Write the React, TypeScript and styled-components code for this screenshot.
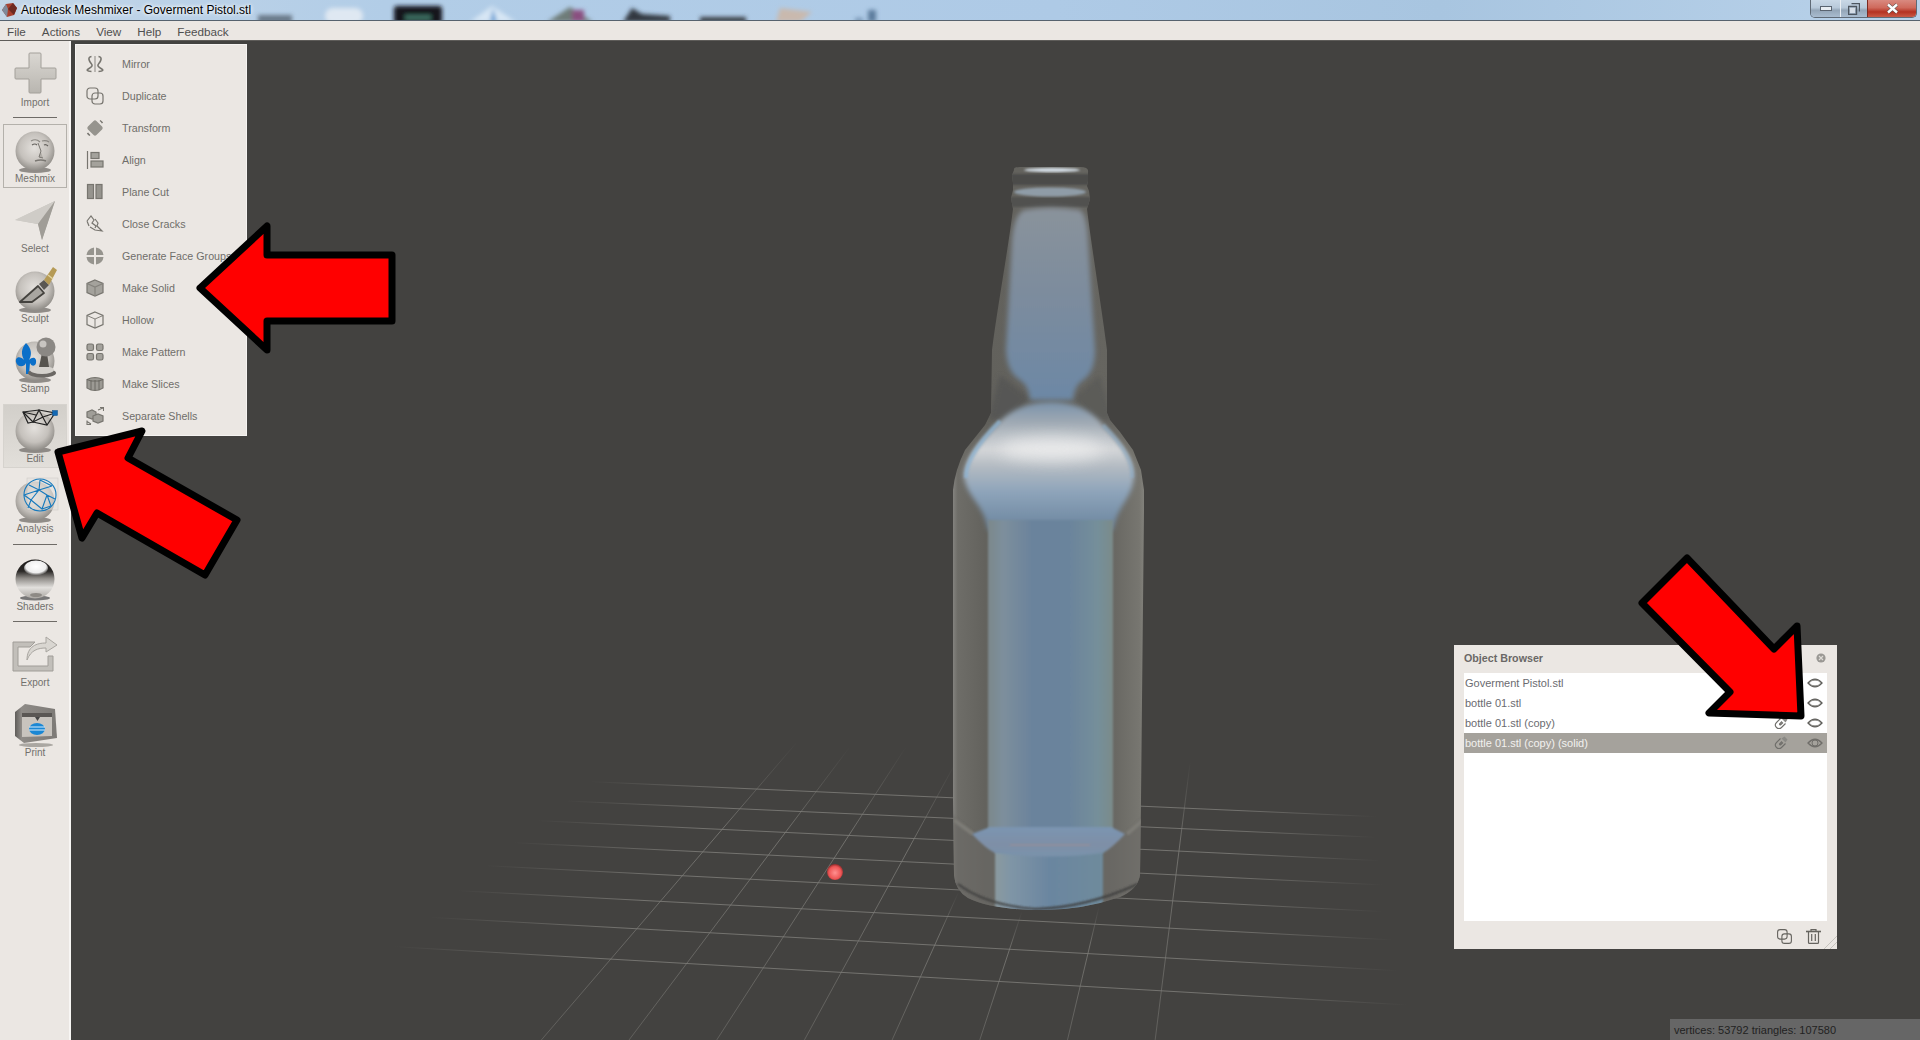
import React from 'react'
import styled, { createGlobalStyle } from 'styled-components'

const UI_FONT = `'Liberation Sans', Arial, sans-serif`

const menuItems: [string, React.FC][] = [
  ['Mirror', MirrorIcon],
  ['Duplicate', DuplicateIcon],
  ['Transform', TransformIcon],
  ['Align', AlignIcon],
  ['Plane Cut', PlaneCutIcon],
  ['Close Cracks', CracksIcon],
  ['Generate Face Groups', FaceGroupsIcon],
  ['Make Solid', SolidIcon],
  ['Hollow', HollowIcon],
  ['Make Pattern', PatternIcon],
  ['Make Slices', SlicesIcon],
  ['Separate Shells', ShellsIcon],
]

const objects = [
  { name: 'Goverment Pistol.stl', magnet: false, selected: false },
  { name: 'bottle 01.stl', magnet: false, selected: false },
  { name: 'bottle 01.stl (copy)', magnet: true, selected: false },
  { name: 'bottle 01.stl (copy) (solid)', magnet: true, selected: true },
]

const hLines = [
  [300, 185, 1420, 290],
  [265, 243, 1420, 352],
  [225, 302, 1425, 422],
  [190, 368, 1430, 495],
  [150, 437, 1430, 575],
  [110, 512, 1445, 660],
  [70, 592, 1450, 752],
  [20, 680, 1465, 855],
]

const vLines = [
  [595, 65, 230, 960],
  [670, 80, 355, 960],
  [750, 80, 480, 960],
  [820, 130, 605, 960],
  [825, 515, 730, 960],
  [915, 575, 855, 960],
  [1025, 560, 980, 960],
  [1155, 125, 1105, 960],
]

const BOTTLE =
  'M1014 170 Q1013 167 1020 167 L1080 167 Q1089 167 1088 172 L1088 181 L1087 186 L1089 191 L1090 199 L1087 209 C1092 250 1102 310 1107 350 L1107 413 L1110 420 L1120 432 L1133 450 L1141 470 L1144 490 L1144 510 L1142 700 L1141 800 L1140 875 Q1138 889 1120 897 Q1080 911 1035 910 Q990 909 968 898 Q955 890 954 875 L953 800 L953 490 Q955 470 965 450 L985 425 L991 413 L992 350 C997 310 1008 250 1013 209 L1011 198 L1013 190 L1013 183 L1012 175 Z'

export default function App() {
  return (
    <Root>
      <GlobalStyle />
      <TitleBar>
        <GlassBlobs />
        <AppIcon />
        <TitleText>Autodesk Meshmixer - Goverment Pistol.stl</TitleText>
        <WindowButtons />
      </TitleBar>
      <MenuBar>
        <MenuEntry>File</MenuEntry>
        <MenuEntry>Actions</MenuEntry>
        <MenuEntry>View</MenuEntry>
        <MenuEntry>Help</MenuEntry>
        <MenuEntry>Feedback</MenuEntry>
      </MenuBar>
      <Workspace>
        <Sidebar>
          <Tool label="Import"><ImportIcon /></Tool>
          <Separator $top={-1} />
          <Tool label="Meshmix" $boxed><MeshmixIcon /></Tool>
          <Tool label="Select"><SelectIcon /></Tool>
          <Tool label="Sculpt"><SculptIcon /></Tool>
          <Tool label="Stamp"><StampIcon /></Tool>
          <Tool label="Edit" $active><EditIcon /></Tool>
          <Tool label="Analysis"><AnalysisIcon /></Tool>
          <Separator $bottom={1} />
          <Tool label="Shaders"><ShadersIcon /></Tool>
          <Separator $top={-1} />
          <Tool label="Export"><ExportIcon /></Tool>
          <Tool label="Print"><PrintIcon /></Tool>
        </Sidebar>
        <Viewport>
          <Scene />
          <Flyout>
            {menuItems.map(([label, Icon]) => (
              <FlyoutRow key={label}>
                <FlyoutIcon><Icon /></FlyoutIcon>
                <FlyoutLabel>{label}</FlyoutLabel>
              </FlyoutRow>
            ))}
          </Flyout>
          <ObjectBrowser>
            <BrowserHeader>
              <BrowserTitle>Object Browser</BrowserTitle>
              <CloseDot>
                <svg width="10" height="10" viewBox="0 0 10 10">
                  <circle cx="5" cy="5" r="4.6" fill="#9a9894" />
                  <path d="M3 3l4 4M7 3l-4 4" stroke="#dedbd6" strokeWidth="1.2" />
                </svg>
              </CloseDot>
            </BrowserHeader>
            <ObjectList>
              {objects.map((o) => (
                <ObjectRow key={o.name} $selected={o.selected}>
                  <ObjectName>{o.name}</ObjectName>
                  {o.magnet && <MagnetIcon />}
                  <EyeIcon selected={o.selected} />
                </ObjectRow>
              ))}
            </ObjectList>
            <BrowserFooter>
              <BrowserDuplicate />
              <TrashIcon />
              <ResizeGrip />
            </BrowserFooter>
          </ObjectBrowser>
          <StatusBar>vertices: 53792 triangles: 107580</StatusBar>
        </Viewport>
      </Workspace>
      <ArrowLayer />
    </Root>
  )
}

function Tool({ label, children, $boxed, $active }: { label: string; children: React.ReactNode; $boxed?: boolean; $active?: boolean }) {
  return (
    <ToolBox $boxed={$boxed} $active={$active}>
      <ToolIcon>{children}</ToolIcon>
      <ToolLabel>{label}</ToolLabel>
    </ToolBox>
  )
}

function GlassBlobs() {
  return (
    <BlobLayer width="1920" height="20" viewBox="0 0 1920 20">
      <defs>
        <filter id="glass" x="-30%" y="-30%" width="160%" height="160%"><feGaussianBlur stdDeviation="2" /></filter>
      </defs>
      <g filter="url(#glass)">
        <rect x="258" y="15" width="34" height="8" fill="#4a5560" opacity=".7" />
        <rect x="325" y="8" width="38" height="16" rx="8" fill="#dfe8f2" />
        <rect x="394" y="6" width="48" height="18" rx="3" fill="#15161e" />
        <rect x="405" y="15" width="26" height="5" fill="#3d6f62" />
        <path d="M470 22 L492 6 L516 22 Z" fill="#d7e6f4" />
        <path d="M490 22 L493 8 L497 22 Z" fill="#6fa3d6" />
        <path d="M547 22 L570 7 L593 22 Z" fill="#6e7c78" />
        <rect x="572" y="10" width="12" height="12" fill="#8a4f80" />
        <path d="M623 22 L632 8 L642 14 L670 16 L670 22 Z" fill="#303840" />
        <rect x="700" y="17" width="46" height="6" fill="#3a4046" />
        <path d="M776 22 L780 8 L812 12 L800 22 Z" fill="#c9b9ae" />
        <rect x="868" y="10" width="8" height="12" fill="#49688a" opacity=".8" />
        <rect x="855" y="18" width="8" height="4" fill="#49688a" opacity=".6" />
      </g>
    </BlobLayer>
  )
}

function AppIcon() {
  return (
    <AppIconSvg width="16" height="16" viewBox="0 0 16 16">
      <path d="M1 8 L5 2 L12 1 L16 6 L13 13 L6 15 Z" fill="#a8402f" />
      <path d="M1 8 L5 2 L7 7 L6 15 Z" fill="#7f8a9b" />
      <path d="M7 7 L12 1 L16 6 L13 13 Z" fill="#6d2a22" />
    </AppIconSvg>
  )
}

function WindowButtons() {
  return (
    <WindowButtonGroup>
      <WindowButton $width={29}>
        <svg width="12" height="6" viewBox="0 0 12 6"><rect x=".5" y=".5" width="11" height="4" fill="#e8edf2" stroke="#5a6470" /></svg>
      </WindowButton>
      <WindowButton $width={26}>
        <svg width="12" height="12" viewBox="0 0 12 12"><path d="M3.5.5h8v8M.5 3.5h8v8h-8z" fill="none" stroke="#4d5660" strokeWidth="1.4" /><rect x="2" y="5" width="5" height="5" fill="#d5dde6" /></svg>
      </WindowButton>
      <WindowButton $width={48} $close>
        <svg width="13" height="11" viewBox="0 0 13 11"><path d="M2 1.5l9 8M11 1.5l-9 8" stroke="#4a4a4a" strokeWidth="3.6" /><path d="M2 1.5l9 8M11 1.5l-9 8" stroke="#fff" strokeWidth="2.4" /></svg>
      </WindowButton>
    </WindowButtonGroup>
  )
}

function Scene() {
  return (
    <SceneSvg width="1849" height="999" viewBox="71 41 1849 999">
      <defs>
        <linearGradient id="fadeH" x1="0" x2="1" y1="0" y2="0">
          <stop offset="0" stopColor="#7c7b77" stopOpacity="0" />
          <stop offset=".2" stopColor="#7c7b77" stopOpacity=".85" />
          <stop offset=".82" stopColor="#7c7b77" stopOpacity=".85" />
          <stop offset="1" stopColor="#7c7b77" stopOpacity="0" />
        </linearGradient>
        <linearGradient id="fadeV" x1="0" x2="0" y1="0" y2="1">
          <stop offset="0" stopColor="#7c7b77" stopOpacity="0" />
          <stop offset=".3" stopColor="#7c7b77" stopOpacity=".8" />
          <stop offset="1" stopColor="#7c7b77" stopOpacity=".5" />
        </linearGradient>
        <radialGradient id="marker" cx=".5" cy=".55" r=".55">
          <stop offset="0" stopColor="#ff9090" />
          <stop offset=".7" stopColor="#ee5555" />
          <stop offset="1" stopColor="#8a2a2a" />
        </radialGradient>
        <linearGradient id="bottleSide" x1="953" x2="1144" y1="0" y2="0" gradientUnits="userSpaceOnUse">
          <stop offset="0" stopColor="#83827e" />
          <stop offset=".025" stopColor="#6e6d68" />
          <stop offset=".18" stopColor="#62615c" />
          <stop offset=".82" stopColor="#666560" />
          <stop offset=".975" stopColor="#777670" />
          <stop offset="1" stopColor="#82817b" />
        </linearGradient>
        <linearGradient id="neckBlue" x1="0" x2="0" y1="205" y2="395" gradientUnits="userSpaceOnUse">
          <stop offset="0" stopColor="#8a939b" />
          <stop offset=".45" stopColor="#7d8c9d" />
          <stop offset="1" stopColor="#6d88a5" />
        </linearGradient>
        <linearGradient id="shoulder" x1="0" x2="0" y1="402" y2="530" gradientUnits="userSpaceOnUse">
          <stop offset="0" stopColor="#7a92aa" />
          <stop offset=".16" stopColor="#9fa9b3" />
          <stop offset=".37" stopColor="#d5d7d9" />
          <stop offset=".5" stopColor="#b4bbc2" />
          <stop offset=".7" stopColor="#8ea4ba" />
          <stop offset="1" stopColor="#6b859e" />
        </linearGradient>
        <linearGradient id="bodyBlue" x1="988" x2="1113" y1="0" y2="0" gradientUnits="userSpaceOnUse">
          <stop offset="0" stopColor="#7b888b" />
          <stop offset=".12" stopColor="#7d8f9c" />
          <stop offset=".35" stopColor="#6b839c" />
          <stop offset=".65" stopColor="#6b849c" />
          <stop offset=".88" stopColor="#758f9a" />
          <stop offset="1" stopColor="#7b8b8a" />
        </linearGradient>
        <linearGradient id="baseBlue" x1="995" x2="1103" y1="0" y2="0" gradientUnits="userSpaceOnUse">
          <stop offset="0" stopColor="#8b9a9f" />
          <stop offset=".15" stopColor="#7f95a6" />
          <stop offset=".5" stopColor="#6b86a0" />
          <stop offset="1" stopColor="#6f8b9c" />
        </linearGradient>
        <linearGradient id="bevel" x1="0" x2="0" y1="826" y2="853" gradientUnits="userSpaceOnUse">
          <stop offset="0" stopColor="#7a95b2" />
          <stop offset=".7" stopColor="#7f8fa6" />
          <stop offset="1" stopColor="#7a92aa" />
        </linearGradient>
        <clipPath id="bottleClip"><path d={BOTTLE} /></clipPath>
        <filter id="b1" x="-10%" y="-10%" width="120%" height="120%"><feGaussianBlur stdDeviation="1" /></filter>
        <filter id="b2" x="-10%" y="-10%" width="120%" height="120%"><feGaussianBlur stdDeviation="2.4" /></filter>
        <filter id="b6" x="-30%" y="-60%" width="160%" height="220%"><feGaussianBlur stdDeviation="8" /></filter>
      </defs>

      <g transform="translate(380 720) scale(.7015 .3333)" fill="none">
        {hLines.map(([x1, y1, x2, y2]) => (
          <GridLine key={y1} x1={x1} y1={y1} x2={x2} y2={y2} stroke="url(#fadeH)" />
        ))}
        {vLines.map(([x1, y1, x2, y2]) => (
          <GridLine key={x1} x1={x1} y1={y1} x2={x2} y2={y2} stroke="url(#fadeV)" />
        ))}
      </g>
      <circle cx="835" cy="872" r="8" fill="url(#marker)" />

      <path d={BOTTLE} fill="url(#bottleSide)" />
      <g clipPath="url(#bottleClip)">
        <rect x="1005" y="174" width="90" height="11" fill="#4c4c4a" filter="url(#b1)" />
        <rect x="1005" y="197" width="90" height="10" fill="#51514f" filter="url(#b1)" />
        <ellipse cx="1052" cy="170" rx="28" ry="2.2" fill="#cfd8e0" filter="url(#b1)" />
        <ellipse cx="1050" cy="192" rx="36" ry="4.6" fill="#8f9ca7" filter="url(#b1)" />
        <path d="M1000 375 L1030 398 L1008 420 L988 420 Z" fill="#565654" filter="url(#b2)" />
        <path d="M1100 375 L1074 398 L1094 420 L1112 420 Z" fill="#5c5c58" filter="url(#b2)" />
        <path
          d="M1024 210 Q1050 205 1080 210 Q1087 215 1088 240 L1095 350 Q1095 372 1083 380 Q1074 386 1073 400 L1030 400 Q1029 386 1020 380 Q1007 372 1006 350 L1012 240 Q1014 215 1024 210 Z"
          fill="url(#neckBlue)"
          filter="url(#b2)"
        />
        <path
          d="M1000 421 Q1020 402 1050 402 Q1085 402 1103 425 C1118 440 1136 460 1134 478 C1132 498 1118 505 1113 530 L988 530 C984 505 968 498 964 478 C962 460 985 436 1000 421 Z"
          fill="url(#shoulder)"
          filter="url(#b2)"
        />
        <ellipse cx="1052" cy="449" rx="52" ry="12" fill="#f2f2f2" opacity=".7" filter="url(#b6)" />
        <path d="M966 478 C965 460 985 436 1000 421" fill="none" stroke="#8fb7d8" strokeWidth="4" opacity=".7" filter="url(#b1)" />
        <path d="M1132 478 C1134 460 1118 440 1103 425" fill="none" stroke="#8fb0cc" strokeWidth="4" opacity=".55" filter="url(#b1)" />
        <rect x="988" y="520" width="125" height="311" fill="url(#bodyBlue)" filter="url(#b1)" />
        <path d="M953 815 L975 834 L995 852 L995 925 L953 925 Z" fill="#6c6b66" opacity=".6" filter="url(#b1)" />
        <path d="M1144 815 L1125 834 L1103 852 L1103 925 L1144 925 Z" fill="#6c6b66" opacity=".6" filter="url(#b1)" />
        <path d="M954 820 L973 834 M1143 820 L1127 834" stroke="#7e7d77" strokeWidth="4" filter="url(#b1)" />
        <rect x="995" y="851" width="108" height="62" fill="url(#baseBlue)" filter="url(#b1)" />
        <path d="M972 834 L990 827 L1111 827 L1125 834 Q1112 848 1103 853 Q1050 860 995 853 Q985 848 972 834 Z" fill="url(#bevel)" filter="url(#b1)" />
        <rect x="1010" y="844" width="80" height="2" fill="#8f8f9c" filter="url(#b1)" />
        <path d="M958 884 Q985 905 1035 909 Q1085 908 1138 884" fill="none" stroke="#3d3d3c" strokeWidth="2" filter="url(#b1)" />
      </g>
    </SceneSvg>
  )
}

function ArrowLayer() {
  return (
    <ArrowSvg width="1920" height="1040" viewBox="0 0 1920 1040">
      <g fill="#ff0000" stroke="#000" strokeWidth="7" strokeLinejoin="round">
        <polygon points="200,288 267,226 267,255 392,255 392,321 267,321 267,350" />
        <polygon points="58,452 142,431 128,458 237,520 205,575 97,513 82,538" />
        <polygon points="1687,558 1642,603 1730,692 1709,713 1801,716 1797,626 1774,649" />
      </g>
    </ArrowSvg>
  )
}

/* ---- sidebar icons ---- */

function Ball({ id, cy = 25 }: { id: string; cy?: number }) {
  return (
    <>
      <defs>
        <radialGradient id={id} cx=".48" cy=".42" r=".62">
          <stop offset="0" stopColor="#e4e1dd" />
          <stop offset=".6" stopColor="#c5c1bc" />
          <stop offset="1" stopColor="#86837e" />
        </radialGradient>
      </defs>
      <ellipse cx="24" cy={cy + 19} rx="16" ry="3" fill="#716e69" opacity=".75" />
      <circle cx="24" cy={cy} r="19.5" fill={`url(#${id})`} />
    </>
  )
}

function ImportIcon() {
  return (
    <svg width="48" height="48" viewBox="0 0 48 48">
      <defs>
        <linearGradient id="plus" x1="0" x2="0" y1="0" y2="1">
          <stop offset="0" stopColor="#dad7d2" />
          <stop offset="1" stopColor="#b9b6b0" />
        </linearGradient>
      </defs>
      <path d="M19 3h10q1 0 1 1v14h14q1 0 1 1v9q0 1-1 1H30v13q0 1-1 1H19q-1 0-1-1V29H5q-1 0-1-1v-9q0-1 1-1h13V4q0-1 1-1z" fill="url(#plus)" stroke="#a3a09a" />
    </svg>
  )
}

function MeshmixIcon() {
  return (
    <svg width="48" height="48" viewBox="0 0 48 48">
      <Ball id="ballFace" />
      <path d="M20 15q5-3 9 1M31 15q4-1 7 1" stroke="#8a8782" strokeWidth="1.1" fill="none" />
      <path d="M27 17l3 8-2 6 4 1" stroke="#7a7772" strokeWidth="1" fill="#b2aea8" />
      <path d="M21 19q3-2 5 0M33 19q2-1 4 1" stroke="#66635f" strokeWidth="1.2" fill="none" />
      <path d="M24 35q6-2 11 0" stroke="#7a7772" strokeWidth="1.4" fill="none" />
    </svg>
  )
}

function SelectIcon() {
  return (
    <svg width="48" height="48" viewBox="0 0 48 48">
      <defs>
        <linearGradient id="sel" x1="0" x2="1" y1="0" y2="1">
          <stop offset="0" stopColor="#e3e0dc" />
          <stop offset="1" stopColor="#9e9b95" />
        </linearGradient>
      </defs>
      <path d="M4 24 L44 5 L31 44 L27 28 Z" fill="url(#sel)" />
      <path d="M4 24 L27 28 L44 5 Z" fill="#cfccc7" />
      <path d="M27 28 L31 44 L44 5 Z" fill="#a09d97" />
    </svg>
  )
}

function SculptIcon() {
  return (
    <svg width="48" height="48" viewBox="0 0 48 48">
      <Ball id="ballSculpt" />
      <path d="M9 36 L27 20 L33 27 L21 36 Z" fill="#a9a6a1" stroke="#45433f" strokeWidth="1.8" strokeLinejoin="round" />
      <path d="M28 18 L33 24 L38 19 L33 14 Z" fill="#5a5752" />
      <path d="M33 14 L38 19 L46 4 L42 1 Z" fill="#b59a55" />
      <path d="M37 9 L42 13" stroke="#e2d39f" strokeWidth="1.5" />
    </svg>
  )
}

function StampIcon() {
  return (
    <svg width="48" height="48" viewBox="0 0 48 48">
      <Ball id="ballStamp" />
      <path d="M15 7 C21 13 21 19 18 24 C22 20 26 22 25 27 C24 31 20 30 19 27 L18 38 L15 38 L15 27 C13 32 6 31 5 26 C4 20 10 20 13 24 C10 18 10 13 15 7 Z" fill="#0a6fc9" />
      <ellipse cx="31" cy="37" rx="14" ry="4.5" fill="#6b6864" />
      <ellipse cx="31" cy="34" rx="12" ry="4" fill="#d5d2cd" />
      <path d="M31 17 L28 31 L38 31 L36 17 Z" fill="#57544f" />
      <circle cx="35" cy="11" r="9.5" fill="#8b8884" />
      <circle cx="32" cy="8" r="3.5" fill="#c8c5c1" />
    </svg>
  )
}

function EditIcon() {
  return (
    <svg width="48" height="48" viewBox="0 0 48 48">
      <Ball id="ballEdit" />
      <g stroke="#222" strokeWidth="1.2" fill="none">
        <path d="M12 6 L28 4 L44 7 L36 19 L22 16 L17 17 Z" />
        <path d="M12 6 L22 16 L28 4 L36 19 M22 16 L32 11 L44 7 M12 6 L25 9" />
      </g>
      <rect x="41.5" y="4.5" width="5" height="5" fill="#1268b3" stroke="#0a4f8b" strokeWidth=".5" />
    </svg>
  )
}

function AnalysisIcon() {
  return (
    <svg width="48" height="48" viewBox="0 0 48 48">
      <Ball id="ballAnalysis" />
      <rect x="16" y="2" width="31" height="32" fill="#e4e2df" opacity=".5" stroke="#b5b2ad" strokeWidth=".6" />
      <g stroke="#1579bd" strokeWidth="1.1" fill="none">
        <circle cx="29" cy="19" r="16" />
        <path d="M29 4 L28 14 L18 9 M28 14 L41 10 M28 14 L36 19 L44 23 M28 14 L20 24 L13 19 M20 24 L31 33 L36 19 M20 24 L17 32 M31 33 L40 30 L36 19 M29 4 L41 10 M28 14 L13 19" />
      </g>
    </svg>
  )
}

function ShadersIcon() {
  return (
    <svg width="48" height="48" viewBox="0 0 48 48">
      <defs>
        <linearGradient id="chrome" x1="0" x2="0" y1="0" y2="1">
          <stop offset="0" stopColor="#1c1a19" />
          <stop offset=".3" stopColor="#2b2927" />
          <stop offset=".48" stopColor="#8e8b87" />
          <stop offset=".72" stopColor="#e2e0dd" />
          <stop offset="1" stopColor="#a9a6a1" />
        </linearGradient>
        <radialGradient id="chromeHi" cx=".5" cy=".4" r=".6">
          <stop offset="0" stopColor="#fff" />
          <stop offset=".7" stopColor="#eee" />
          <stop offset="1" stopColor="#ddd" stopOpacity="0" />
        </radialGradient>
      </defs>
      <ellipse cx="24" cy="44" rx="15" ry="2.5" fill="#777" />
      <circle cx="24" cy="25" r="19.5" fill="url(#chrome)" />
      <ellipse cx="25" cy="14" rx="12" ry="7.5" fill="url(#chromeHi)" />
      <ellipse cx="25" cy="41" rx="6" ry="2" fill="#8d8a85" />
    </svg>
  )
}

function ExportIcon() {
  return (
    <svg width="48" height="48" viewBox="0 0 48 48">
      <path d="M2 12 H24 L19 17 H7 V36 H37 V26 H42 V41 H2 Z" fill="#c2bfba" stroke="#a09d98" />
      <path d="M16 30 C16 16 26 13 35 13 V7 L46 15 L35 22 V18 C27 18 20 20 16 30 Z" fill="#d9d6d1" stroke="#a8a5a0" />
    </svg>
  )
}

function PrintIcon() {
  return (
    <svg width="48" height="48" viewBox="0 0 48 48">
      <defs>
        <linearGradient id="printBody" x1="0" x2="1" y1="0" y2="0">
          <stop offset="0" stopColor="#5f5d5a" />
          <stop offset=".15" stopColor="#8e8b87" />
          <stop offset="1" stopColor="#7d7a76" />
        </linearGradient>
      </defs>
      <path d="M4 12 L14 4 L44 9 L46 38 L13 43 L4 36 Z" fill="url(#printBody)" />
      <path d="M11 13 L41 15 L41 36 L11 37 Z" fill="#c8c4be" />
      <rect x="11" y="13" width="30" height="4" fill="#5a5754" />
      <path d="M24 17h5l-2.5 4z" fill="#444" />
      <ellipse cx="26" cy="29" rx="8" ry="6" fill="#1a87d4" />
      <path d="M18 27h16M18 30h16" stroke="#d7eefc" strokeWidth="1.2" />
      <ellipse cx="25" cy="45" rx="17" ry="2" fill="#8e8b86" opacity=".7" />
    </svg>
  )
}

/* ---- flyout icons ---- */

function Glyph({ children }: { children: React.ReactNode }) {
  return (
    <svg width="18" height="18" viewBox="0 0 18 18" fill="none" stroke="#77756f" strokeWidth="1.2">
      {children}
    </svg>
  )
}

function MirrorIcon() {
  return (
    <Glyph>
      <path d="M9 1v16" strokeWidth="1.2" stroke="#9a9892" />
      <path d="M5.500 1.500Q2.500 2 3 4.500T5.500 9 3 13.500 5.500 16.500M12.500 1.500Q15.500 2 15 4.500T12.500 9 15 13.500 12.500 16.500" strokeWidth="1.6" />
    </Glyph>
  )
}
function DuplicateIcon() {
  return (
    <Glyph>
      <rect x="1" y="1" width="11" height="11" rx="3" />
      <rect x="6" y="6" width="11" height="11" rx="3" />
    </Glyph>
  )
}
function TransformIcon() {
  return (
    <Glyph>
      <rect x="3" y="3" width="12" height="12" rx="2" transform="rotate(45 9 9)" fill="#96948e" stroke="none" />
      <path d="M14 1.500q1.500 1 2.500 2.500M1.500 14q1 1.500 2.500 2.500" strokeWidth="1.5" />
    </Glyph>
  )
}
function AlignIcon() {
  return (
    <Glyph>
      <path d="M1.500 0v18" />
      <rect x="5" y="1.500" width="8" height="6" fill="#a4a29c" />
      <rect x="5" y="10" width="12" height="6" fill="#a4a29c" />
    </Glyph>
  )
}
function PlaneCutIcon() {
  return (
    <Glyph>
      <rect x="1.500" y="1.500" width="6" height="14" fill="#96948e" />
      <rect x="10" y="1.500" width="6" height="14" fill="#96948e" />
    </Glyph>
  )
}
function CracksIcon() {
  return (
    <Glyph>
      <path d="M1 6L5 1 8 5 6 8 10 11 9 13 M3 11 L1 6 M9 4 L12 8 11 11 16 16 9 15 L4 12" />
    </Glyph>
  )
}
function FaceGroupsIcon() {
  return (
    <Glyph>
      <g fill="#96948e" stroke="none">
        <path d="M8 .5V8H.5Q1 2 8 .5z" />
        <path d="M10 .5V8h7.500Q17 2 10 .5z" />
        <path d="M8 17.500V10H.5Q1 16 8 17.500z" />
        <path d="M10 17.500V10h7.500Q17 16 10 17.500z" />
      </g>
    </Glyph>
  )
}
function SolidIcon() {
  return (
    <Glyph>
      <path d="M9 1L17 4.500V13.500L9 17 1 13.500V4.500Z" fill="#a4a29c" />
      <path d="M1 4.500L9 8 17 4.500M9 8V17" stroke="#85837d" />
    </Glyph>
  )
}
function HollowIcon() {
  return (
    <Glyph>
      <path d="M9 1L17 4.500V13.500L9 17 1 13.500V4.500Z" />
      <path d="M1 4.500L9 8 17 4.500M9 8V17" strokeWidth=".9" />
    </Glyph>
  )
}
function PatternIcon() {
  return (
    <Glyph>
      <g fill="#a4a29c">
        <rect x="1" y="1" width="6.500" height="6.500" rx="1.800" />
        <rect x="10.500" y="1" width="6.500" height="6.500" rx="1.800" />
        <rect x="1" y="10.500" width="6.500" height="6.500" rx="1.800" />
        <rect x="10.500" y="10.500" width="6.500" height="6.500" rx="1.800" />
      </g>
    </Glyph>
  )
}
function SlicesIcon() {
  return (
    <Glyph>
      <path d="M1 4.500L5 3 9 2.500 13 3 17 4.500V13L13 15 9 15.500 5 15 1 13Z" fill="#9c9a94" />
      <path d="M5 5v10M9 5v10.500M13 5v10M1 4.500L5 6 9 6 13 6 17 4.500" strokeWidth=".9" stroke="#66645f" />
    </Glyph>
  )
}
function ShellsIcon() {
  return (
    <Glyph>
      <path d="M1 5L6 3 10 5V10L6 12 1 10Z" fill="#a09e98" />
      <path d="M7 9L12 7 17 9V14L12 16 7 14Z" fill="#a09e98" />
      <path d="M12 3L17 1M14 .5H17.500V4M1 14.500L5 17M1 13.500V17.500H5" strokeWidth="1.100" />
    </Glyph>
  )
}

/* ---- browser icons ---- */

function EyeIcon({ selected }: { selected: boolean }) {
  return (
    <EyeSvg width="16" height="12" viewBox="0 0 16 12">
      <path d="M1 6Q8-1.500 15 6 8 13.500 1 6Z" fill={selected ? '#a5a29c' : '#fff'} stroke={selected ? '#706e6a' : '#5f5e5a'} strokeWidth="1.300" />
      <ellipse cx="8" cy="6" rx={selected ? 3 : 5.500} ry={selected ? 3 : 2.800} fill={selected ? 'none' : '#fff'} stroke={selected ? '#706e6a' : '#8c8b87'} strokeWidth="1" />
    </EyeSvg>
  )
}

function MagnetIcon() {
  return (
    <MagnetSvg width="14" height="14" viewBox="0 0 14 14">
      <path d="M6.500 2.500L2.500 6.500A3.500 3.500 0 0 0 7.500 11.500L11.500 7.500" fill="none" stroke="#6f6e6a" strokeWidth="1.100" />
      <path d="M8 5.500L5.500 8A1 1 0 0 0 6.500 9L9 6.500" fill="none" stroke="#6f6e6a" strokeWidth="1.100" />
      <path d="M7.500 2.500L10.500 0.500 13.500 3.500 11.500 6.500Z" fill="#8a8985" />
    </MagnetSvg>
  )
}

function BrowserDuplicate() {
  return (
    <svg width="15" height="15" viewBox="0 0 15 15" fill="none" stroke="#66645f" strokeWidth="1.100">
      <rect x=".6" y=".6" width="9.500" height="9.500" rx="2.500" />
      <rect x="4.900" y="4.900" width="9.500" height="9.500" rx="2.500" />
    </svg>
  )
}

function TrashIcon() {
  return (
    <TrashSvg width="15" height="15" viewBox="0 0 15 15" fill="none" stroke="#66645f" strokeWidth="1.200">
      <path d="M0 2.500H15" strokeWidth="1.600" />
      <path d="M5 2V.7H10V2" />
      <path d="M2.500 3V13.500Q2.500 14.400 3.500 14.400H11.500Q12.500 14.400 12.500 13.500V3" />
      <path d="M5.700 5V12M9.300 5V12" />
    </TrashSvg>
  )
}

function ResizeGrip() {
  return (
    <GripSvg width="13" height="13" viewBox="0 0 13 13" stroke="#c6c3be" strokeWidth="1">
      <path d="M0 13L13 0M6 13L13 6" />
    </GripSvg>
  )
}

/* ---- styles ---- */

const GlobalStyle = createGlobalStyle`
  html, body {
    margin: 0;
    padding: 0;
    background: #434240;
  }
`

const Root = styled.div`
  position: relative;
  width: 1920px;
  height: 1040px;
  overflow: hidden;
  display: flex;
  flex-direction: column;
  font-family: ${UI_FONT};
  background: #434240;
`

const TitleBar = styled.div`
  position: relative;
  flex: none;
  height: 20px;
  display: flex;
  align-items: center;
  padding-left: 1px;
  gap: 4px;
  overflow: hidden;
  background: linear-gradient(90deg, #c3d6e8 0%, #b2cde7 20%, #aecae6 55%, #a8c5e0 75%, #b9d2ea 100%);
  border-bottom: 1px solid #56626e;
`

const BlobLayer = styled.svg`
  position: absolute;
  left: 0;
  top: 0;
`

const AppIconSvg = styled.svg`
  position: relative;
  flex: none;
`

const TitleText = styled.span`
  position: relative;
  font-size: 12px;
  color: #000;
  text-shadow: 0 0 4px #fff, 0 0 4px #fff;
  white-space: nowrap;
`

const WindowButtonGroup = styled.div`
  position: relative;
  margin-left: auto;
  margin-right: 3px;
  align-self: flex-start;
  height: 17px;
  display: flex;
  border: 1px solid #5f6a76;
  border-top: 0;
  border-radius: 0 0 5px 5px;
  overflow: hidden;
`

const WindowButton = styled.div<{ $width: number; $close?: boolean }>`
  width: ${(p) => p.$width}px;
  display: flex;
  align-items: center;
  justify-content: center;
  border-left: 1px solid ${(p) => (p.$close ? '#7c2a20' : '#e9eef3')};
  background: ${(p) =>
    p.$close
      ? 'linear-gradient(180deg, #d98a80 0%, #cf6a5c 45%, #b43222 70%, #c95a46 100%)'
      : 'linear-gradient(180deg, #c9d8e6 0%, #b8c9da 45%, #94a6b8 60%, #a9bccf 100%)'};
  &:first-child {
    border-left: 0;
  }
`

const MenuBar = styled.div`
  flex: none;
  box-sizing: border-box;
  height: 20px;
  display: flex;
  align-items: center;
  background: #ebe7e3;
  border-bottom: 1px solid #5e5c59;
  padding: 1px 0 0 7px;
  gap: 16px;
`

const MenuEntry = styled.span`
  font-size: 11.7px;
  color: #4f4f4f;
`

const Workspace = styled.div`
  flex: 1;
  min-height: 0;
  display: flex;
`

const Sidebar = styled.aside`
  flex: none;
  box-sizing: border-box;
  width: 71px;
  padding: 7px 2px 0 3px;
  display: flex;
  flex-direction: column;
  align-items: center;
  gap: 6px;
  background: #ebe7e3;
  border-right: 2px solid #f8f6f4;
`

const ToolBox = styled.div<{ $boxed?: boolean; $active?: boolean }>`
  box-sizing: border-box;
  flex: none;
  width: 64px;
  height: 64px;
  display: flex;
  flex-direction: column;
  align-items: center;
  position: relative;
  border: 1px solid ${(p) => (p.$boxed ? '#b4b1ab' : p.$active ? '#d6d3ce' : 'transparent')};
  background: ${(p) => (p.$active ? 'linear-gradient(180deg, #d2cfca, #e2dfda)' : 'transparent')};
`

const ToolIcon = styled.div`
  height: 48px;
  margin-top: 1px;
  display: flex;
  align-items: center;
  justify-content: center;
`

const ToolLabel = styled.span`
  font-size: 10px;
  line-height: 12px;
  margin-top: -1px;
  color: #72706c;
`

const Separator = styled.div<{ $top?: number; $bottom?: number }>`
  flex: none;
  width: 44px;
  height: 1px;
  background: #6e6b67;
  margin: ${(p) => p.$top ?? 0}px 0 ${(p) => p.$bottom ?? 0}px;
`

const Viewport = styled.main`
  position: relative;
  flex: 1;
  background: #434240;
  overflow: hidden;
`

const SceneSvg = styled.svg`
  position: absolute;
  left: 0;
  top: 0;
`

const GridLine = styled.line`
  vector-effect: non-scaling-stroke;
  stroke-width: 1px;
`

const Flyout = styled.div`
  position: absolute;
  left: 4px;
  top: 3px;
  box-sizing: border-box;
  width: 172px;
  height: 392px;
  padding: 3px 0;
  background: #ebe7e3;
  border: 1px solid #f5f3f1;
`

const FlyoutRow = styled.div`
  height: 32px;
  display: flex;
  align-items: center;
`

const FlyoutIcon = styled.div`
  width: 46px;
  padding-left: 10px;
  box-sizing: border-box;
  display: flex;
  align-items: center;
`

const FlyoutLabel = styled.span`
  font-size: 10.7px;
  color: #6f6e6a;
  white-space: nowrap;
`

const ObjectBrowser = styled.section`
  position: absolute;
  left: 1383px;
  top: 604px;
  box-sizing: border-box;
  width: 383px;
  height: 304px;
  padding: 0 10px;
  display: flex;
  flex-direction: column;
  background: #ebe7e3;
`

const BrowserHeader = styled.header`
  box-sizing: border-box;
  height: 28px;
  padding-bottom: 2px;
  flex: none;
  display: flex;
  align-items: center;
  justify-content: space-between;
`

const BrowserTitle = styled.span`
  font-size: 10.7px;
  font-weight: bold;
  color: #6a6866;
`

const CloseDot = styled.div`
  display: flex;
  margin-right: 1px;
`

const ObjectList = styled.div`
  flex: 1;
  background: #fff;
`

const ObjectRow = styled.div<{ $selected: boolean }>`
  height: 20px;
  display: flex;
  align-items: center;
  padding: 0 4px 0 1px;
  background: ${(p) => (p.$selected ? '#a5a29c' : 'transparent')};
  color: ${(p) => (p.$selected ? '#f2f1ef' : '#6b6b70')};
`

const ObjectName = styled.span`
  flex: 1;
  font-size: 11px;
`

const EyeSvg = styled.svg`
  flex: none;
`

const MagnetSvg = styled.svg`
  flex: none;
  margin-right: 19px;
`

const BrowserFooter = styled.footer`
  position: relative;
  flex: none;
  height: 28px;
  display: flex;
  align-items: center;
  justify-content: flex-end;
  padding: 2px 6px 0 0;
  box-sizing: border-box;
`

const TrashSvg = styled.svg`
  margin-left: 14px;
`

const GripSvg = styled.svg`
  position: absolute;
  right: -10px;
  bottom: 0;
`

const StatusBar = styled.div`
  position: absolute;
  right: 0;
  bottom: 0;
  box-sizing: border-box;
  width: 250px;
  height: 21px;
  padding-left: 4px;
  display: flex;
  align-items: center;
  background: #666;
  color: #222;
  font-size: 11px;
`

const ArrowSvg = styled.svg`
  position: absolute;
  left: 0;
  top: 0;
  pointer-events: none;
`
